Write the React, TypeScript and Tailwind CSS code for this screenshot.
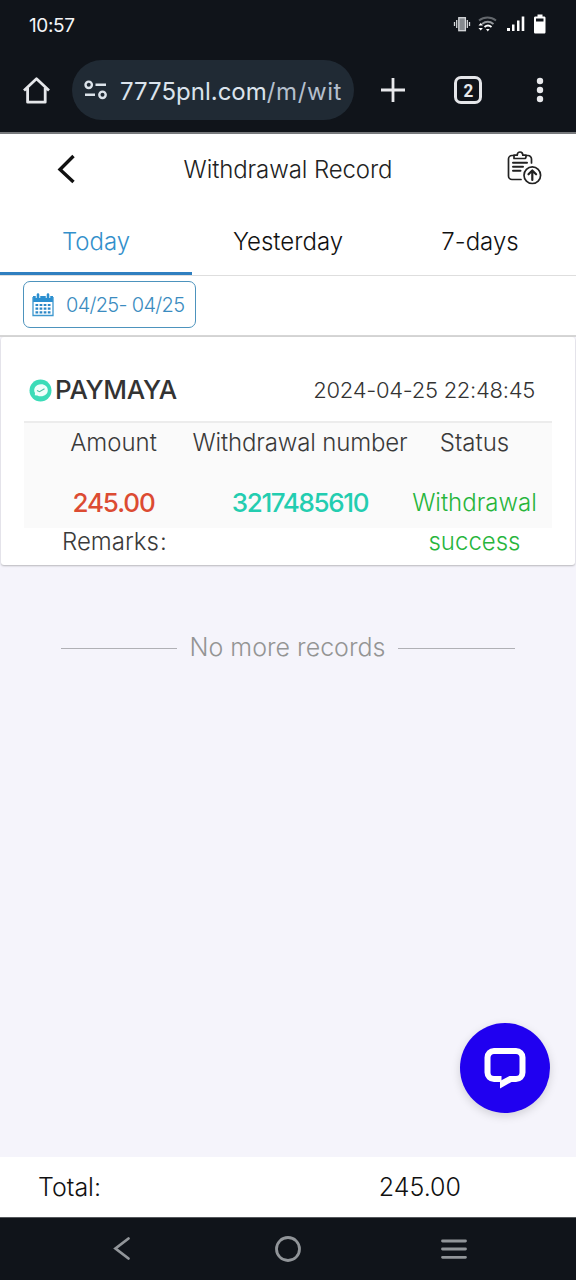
const tabs = ["Today", "Yesterday", "7-days"];

function StatusBar() {
  return (
    <div className="flex h-[48px] items-center justify-between pl-[29px] pr-[30px] text-[#f4f5f7]">
      <span className="mt-[3px] text-[19px] leading-6 tracking-[-0.4px]">10:57</span>
      <svg width="94" height="24" viewBox="0 0 94 24" fill="none" className="mr-[-1px]">
        <g stroke="#d5d7da" strokeWidth="1.3">
          <path d="M1.5 10v4M3.7 8v8M14.3 8v8M16.5 10v4" />
          <rect x="5.8" y="5.7" width="6.6" height="13" fill="#85898e" />
        </g>
        <g strokeWidth="1.9">
          <path d="M26 8.5c5-4 12-4 17 0" stroke="#63676c" />
          <path d="M29 12c3.5-2.7 8-2.7 11.5 0" stroke="#94989c" />
          <path d="M31.5 15c2-1.6 5-1.6 7 0" stroke="#fff" />
        </g>
        <path d="M25.5 13.5l2.2-2.6 2.2 2.6zM25.5 16l2.2 2.6 2.2-2.6zM33 17h3.6l-1.8 2.5z" fill="#fff" />
        <path d="M54 16h3v3h-3zM59 12.5h2.5V19H59zM64 8.5h2.5V19H64zM68.7 4.5h2.6V19h-2.6z" fill="#fff" />
        <path d="M84.5 2.5h5v2h1.5c1 0 1.500.5 1.500 1.500v14c0 1-.5 1.500-1.500 1.500h-8.500c-1 0-1.500-.5-1.500-1.500V6c0-1 .5-1.500 1.500-1.500h2z" fill="#fff" />
        <path d="M83 6.5h7.5v3H83z" fill="#11151b" />
      </svg>
    </div>
  );
}

function BrowserBar() {
  return (
    <div className="flex h-[84px] items-center">
      <svg width="28" height="28" viewBox="0 0 28 28" fill="none" className="ml-[22px]">
        <path
          d="M2 14.5 14.5 2.8 27 14.5M5.6 12v14.2h17.6V12"
          stroke="#e5e7ea"
          strokeWidth="2.8"
          strokeLinejoin="round"
        />
      </svg>
      <div className="ml-[22px] flex h-[60px] w-[282px] items-center rounded-full bg-[#202a34] pl-3">
        <svg width="24" height="20" viewBox="0 0 24 20" fill="none" stroke="#dce3ea" strokeWidth="2.4">
          <circle cx="4.7" cy="4.8" r="3.2" />
          <path d="M11.5 4.8H22M1 14.8h10" />
          <circle cx="18.5" cy="14.8" r="3.2" />
        </svg>
        <span className="ml-[12px] mt-[3px] whitespace-nowrap text-[24px] leading-8 text-[#dbe3ec]">
          7775pnl.com<span className="tracking-[0.6px] text-[#b4bfcc]">/m/wit</span>
        </span>
      </div>
      <svg width="26" height="26" viewBox="0 0 26 26" className="ml-[26px]">
        <path d="M13 1v24M1 13h24" stroke="#e8e9ec" strokeWidth="2.8" />
      </svg>
      <div className="ml-[48px] flex size-[28px] items-center justify-center rounded-[7px] border-[3px] border-[#e5e6e9] font-['Roboto'] text-[19px] font-bold leading-none text-[#e8e9ec]">
        <span className="scale-x-90">2</span>
      </div>
      <svg width="8" height="26" viewBox="0 0 8 26" fill="#e8e9ec" className="ml-[54px]">
        <circle cx="4" cy="4" r="3.2" />
        <circle cx="4" cy="13" r="3.2" />
        <circle cx="4" cy="22" r="3.2" />
      </svg>
    </div>
  );
}

function Header() {
  return (
    <header className="grid h-[74px] grid-cols-[134px_1fr_134px] items-center">
      <svg width="20" height="30" viewBox="0 0 20 30" fill="none" className="mb-[4px] ml-[57px]">
        <path d="M16.5 2 3 15.5 16.5 28" stroke="#111" strokeWidth="3.4" />
      </svg>
      <h1 className="mb-[2px] text-center text-[24px] leading-8 tracking-[-0.1px] text-[#222]">
        Withdrawal Record
      </h1>
      <svg
        width="36"
        height="36"
        viewBox="0 0 36 36"
        fill="none"
        stroke="#222"
        strokeWidth="1.7"
        strokeLinecap="round"
        strokeLinejoin="round"
        className="mb-[7px] ml-[64px]"
      >
        <path d="M8 5.5H6A3.5 3.5 0 0 0 2.5 9v17A3.5 3.5 0 0 0 6 29.500h9M20 5.500h2A3.500 3.500 0 0 1 25.500 9v4" />
        <path d="M8 8.5V5.2h3.2c0-4.3 5.6-4.3 5.6 0H20v1.6c0 1-.7 1.7-1.7 1.7z" />
        <path d="M7 12.7h14M7 16.7h10M7 20.7h7.5" strokeWidth="2" />
        <circle cx="26.3" cy="25.2" r="8.3" />
        <path d="M26.3 30v-9M22.5 24.300l3.800-3.800 3.800 3.800" strokeWidth="2.2" />
      </svg>
    </header>
  );
}

function CalendarIcon() {
  return (
    <svg width="22" height="24" viewBox="0 0 22 24" fill="none">
      <path d="M1 3h20v6H1z" fill="#2b8fd0" />
      <path d="M1 4v18.5h20V4" stroke="#3c97cf" strokeWidth="1.3" />
      <path d="M6 1v4M16 1v4" stroke="#fff" strokeWidth="4.5" />
      <path d="M6 1.5v3.5M16 1.5v3.5" stroke="#2b8fd0" strokeWidth="2.6" strokeLinecap="round" />
      <path
        d="M3.5 12h15M3.5 15.7h15M3.5 19.4h15"
        stroke="#2b86c6"
        strokeWidth="2.2"
        strokeDasharray="2.7 1.4"
      />
    </svg>
  );
}

function RecordCard() {
  return (
    <section className="mx-px h-[228px] rounded-[3px] bg-white px-[23px] shadow-[0_1px_2px_rgba(0,0,0,0.25)]">
      <div className="flex h-[86px] items-center justify-between border-b-2 border-[#ececec] pl-[5px] pr-[17px] pt-[22px]">
        <div className="flex items-center">
          <svg width="23" height="23" viewBox="0 0 23 23">
            <circle cx="11.5" cy="11.5" r="11" fill="#3bdcb8" />
            <path
              d="M12 5.2c4 0 6.8 2.5 6.8 6s-2.9 6-6.900 6c-1.300 0-2.600-.2-3.600-.8L5.800 16.200l.2-2.200c-2.300-4.300.8-8.800 6-8.800z"
              fill="#effffb"
            />
            <path d="m8 11.5 2.500 1.200 5-3" fill="none" stroke="#4bbfa4" strokeWidth="1.1" />
          </svg>
          <span className="ml-[3px] text-[26px] font-medium leading-8 tracking-[-0.3px] text-[#333]">
            PAYMAYA
          </span>
        </div>
        <time className="text-[22px] leading-8 tracking-[-0.28px] text-[#333]">2024-04-25 22:48:45</time>
      </div>
      <div className="h-[105px] bg-[#fafafa]">
        <div className="grid grid-cols-[179px_194px_155px] text-center text-[24px] leading-[39px] text-[#3a3a3a]">
          <span className="h-[40px]">Amount</span>
          <span className="flex justify-center whitespace-nowrap tracking-[-0.15px]">Withdrawal number</span>
          <span>Status</span>
          <span className="pt-[20px] text-[26px] font-medium tracking-[-1.1px] text-[#dc4b32]">245.00</span>
          <span className="pt-[20px] text-[26px] font-medium tracking-[-1.35px] text-[#23cdb0]">
            3217485610
          </span>
          <span className="row-span-2 pt-[20px] text-[#27b53c]">
            Withdrawal
            <br />
            success
          </span>
          <span className="col-span-2 pl-[38px] text-left">
            Remarks<span className="ml-px">:</span>
          </span>
        </div>
      </div>
    </section>
  );
}

function SystemNav() {
  return (
    <nav className="grid h-[63px] grid-cols-[244px_88px_244px] items-center justify-items-center border-t border-[#55585c] bg-[#10141a]">
      <svg width="20" height="26" viewBox="0 0 20 26" fill="none">
        <path d="M16.5 2.5 3.5 12.5l13 10" stroke="#919599" strokeWidth="2.8" strokeLinecap="round" />
      </svg>
      <svg width="28" height="28" viewBox="0 0 28 28" fill="none">
        <circle cx="14" cy="14" r="11.5" stroke="#919599" strokeWidth="2.8" />
      </svg>
      <svg width="28" height="24" viewBox="0 0 28 24">
        <path d="M2.5 4h23M2.5 12h23M2.5 20.3h23" stroke="#919599" strokeWidth="2.8" strokeLinecap="round" />
      </svg>
    </nav>
  );
}

export default function App() {
  return (
    <div className="relative flex h-[1280px] w-[576px] flex-col overflow-hidden bg-[#f5f4fb] font-['Inter',sans-serif] font-light">
      <div className="h-[134px] border-b-2 border-[#77797c] bg-[#10141a] font-normal">
        <StatusBar />
        <BrowserBar />
      </div>

      <div className="h-[203px] border-b-2 border-[#d6d6d6] bg-white">
        <Header />
        <div className="grid h-[68px] grid-cols-3 border-b border-[#dedede] text-center text-[24px] leading-[60px]">
          {tabs.map((tab, i) => (
            <button
              key={tab}
              className={
                i === 0
                  ? "border-b-[3px] border-[#2f7fc0] pt-1 text-[#3390cb]"
                  : "border-b-[3px] border-transparent pt-1 text-[#111]"
              }
            >
              {tab}
            </button>
          ))}
        </div>
        <button className="ml-[23px] mt-[5px] flex h-[47px] w-[173px] items-center rounded-[7px] border border-[#4d93bd] pl-[8px] text-[20px] text-[#3b8cc0]">
          <CalendarIcon />
          <span className="ml-[12px] whitespace-nowrap tracking-[-0.7px]">04/25- 04/25</span>
        </button>
      </div>

      <RecordCard />

      <div className="flex flex-1 items-start px-[61px] pt-[66px]">
        <div className="flex w-full items-center text-[25px] leading-8 text-[#949494]">
          <span className="mt-[3px] h-px w-[116px] bg-[#b0b0b5]" />
          <span className="flex-1 whitespace-nowrap text-center">No more records</span>
          <span className="mt-[3px] h-px w-[117px] bg-[#b0b0b5]" />
        </div>
      </div>

      <footer className="flex h-[60px] items-center justify-between bg-white pl-[38px] pr-[115px] pt-[2px] text-[25px] text-[#111]">
        <span>Total:</span>
        <span>245.00</span>
      </footer>
      <SystemNav />

      <button className="absolute bottom-[167px] right-[26px] flex size-[90px] items-center justify-center rounded-full bg-[#2000f0] shadow-[0_3px_10px_rgba(0,0,0,0.15)]">
        <svg width="44" height="44" viewBox="0 0 44 44" fill="none">
          <path
            d="M18.5 33H11a6.5 6.500 0 0 1-6.500-6.500V11.500A6.500 6.500 0 0 1 11 5h22a6.500 6.500 0 0 1 6.500 6.500v15a6.500 6.500 0 0 1-6.500 6.500H27"
            stroke="#fff"
            strokeWidth="6"
          />
          <path d="M17 42.500V35l9.500-5H33v6h-4.500z" fill="#fff" />
        </svg>
      </button>
    </div>
  );
}
